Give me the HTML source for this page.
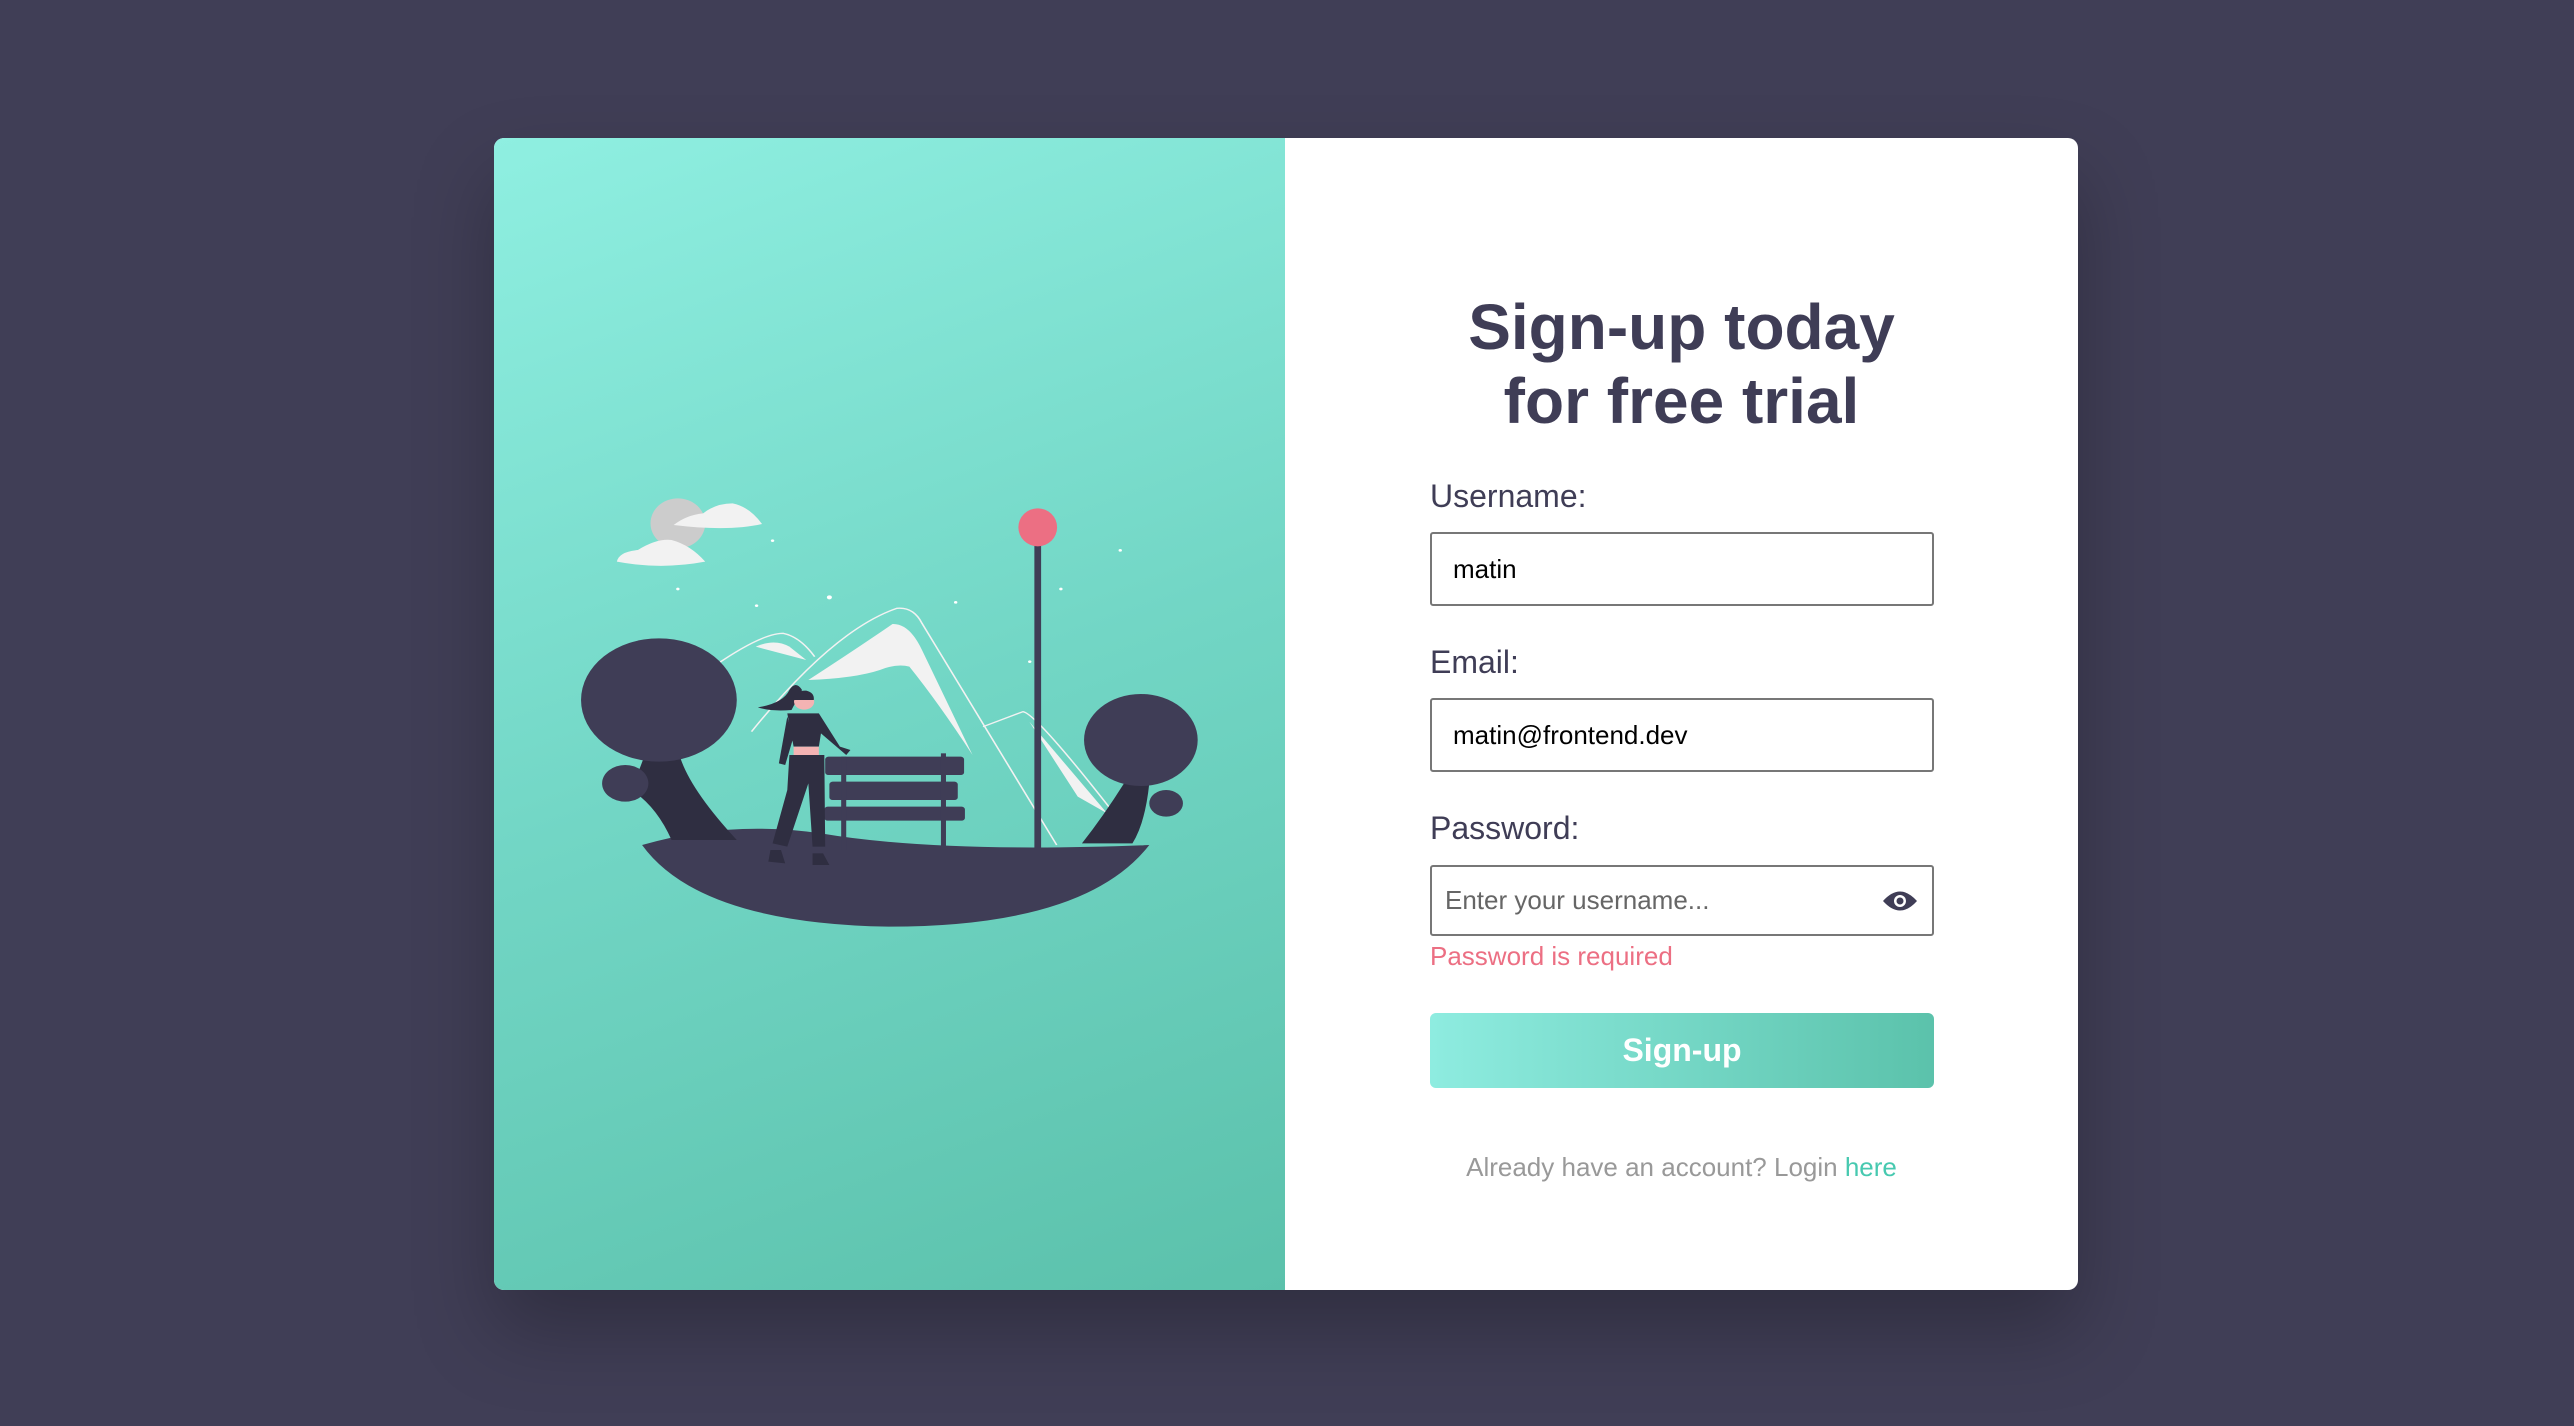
<!DOCTYPE html>
<html><head><meta charset="utf-8"><style>
*{box-sizing:border-box;margin:0;padding:0}
body{width:2574px;height:1426px;background:#403e56;font-family:"Liberation Sans",Arial,sans-serif;position:relative;overflow:hidden}
.card{position:absolute;left:494px;top:138px;width:1584px;height:1152px;border-radius:10px;overflow:hidden;background:#fff;box-shadow:0 40px 80px rgba(0,0,0,.25)}
.left{position:absolute;left:0;top:0;width:791px;height:1152px;background:linear-gradient(160deg,#8fefe1 0%,#72d6c5 50%,#5bc1ab 100%)}
.ill{position:absolute;left:66px;top:332px;width:660px;height:480px}
h1{position:absolute;left:791px;width:793px;top:152px;text-align:center;color:#3f3d56;font-size:64px;line-height:74px;font-weight:700}
.lbl{position:absolute;left:936px;color:#3f3d56;font-size:32px}
.inp{position:absolute;left:936px;width:504px;height:74px;border:2px solid #777;border-radius:3px;font-size:26px;color:#000;padding-left:21px;line-height:70px}
.err{position:absolute;left:936px;top:803px;color:#ec6f83;font-size:26px}
.btn{position:absolute;left:936px;top:875px;width:504px;height:75px;border-radius:6px;background:linear-gradient(90deg,#8eece0,#5bc2ab);color:#fff;font-weight:700;font-size:32px;text-align:center;line-height:75px}
.foot{position:absolute;left:791px;width:793px;top:1014px;text-align:center;color:#999;font-size:26px}
.foot span{color:#47c9b0}
</style></head><body>
<div class="card">
<div class="left">
<svg class="ill" viewBox="0 0 1568 1440" preserveAspectRatio="none">
<ellipse cx="280" cy="160" rx="65" ry="75" fill="#cccccc"/>
<path d="M270 165Q300 135 340 130Q370 100 410 100Q450 110 480 162Q400 185 270 165Z" fill="#f2f2f2"/>
<path d="M135 275Q140 245 185 240Q230 205 265 210Q310 225 345 275Q240 300 135 275Z" fill="#f2f2f2"/>
<g fill="#fff"><circle cx="505" cy="212" r="4"/><circle cx="280" cy="357" r="4"/><circle cx="467" cy="407" r="4"/><circle cx="640" cy="382" r="6"/><circle cx="940" cy="397" r="4"/><circle cx="1190" cy="357" r="4"/><circle cx="1331" cy="241" r="4"/><circle cx="1116" cy="575" r="4"/></g>
<path d="M370 585Q480 490 530 490Q570 500 605 560" fill="none" stroke="#f2f2f2" stroke-width="4"/>
<path d="M465 530Q510 505 545 530L585 570Z" fill="#f2f2f2"/>
<path d="M455 785Q650 480 800 415Q840 410 860 460L1180 1125" fill="none" stroke="#f2f2f2" stroke-width="4"/>
<path d="M590 630Q700 540 790 462Q830 460 860 540L980 855Q900 700 830 590Q800 580 760 600Q700 625 590 630Z" fill="#f2f2f2"/>
<path d="M1005 770L1100 725Q1130 730 1310 1020" fill="none" stroke="#f2f2f2" stroke-width="4"/>
<path d="M1115 755L1300 1030L1230 980Z" fill="#f2f2f2"/>
<rect x="1127" y="225" width="16" height="910" fill="#3f3d56"/>
<ellipse cx="1135" cy="172" rx="46" ry="57" fill="#ec6f83"/>
<path d="M195 1125Q400 1050 620 1090Q900 1150 1400 1125Q1250 1370 780 1370Q330 1360 195 1125Z" fill="#3f3d56"/>
<path d="M200 860L285 860Q310 960 420 1110L265 1110Q230 1010 170 960Z" fill="#2f2e41"/>
<ellipse cx="235" cy="690" rx="185" ry="185" fill="#3f3d56"/>
<circle cx="155" cy="940" r="55" fill="#3f3d56"/>
<path d="M1340 940L1400 940Q1390 1060 1360 1120L1240 1120Q1290 1040 1340 940Z" fill="#2f2e41"/>
<ellipse cx="1380" cy="810" rx="135" ry="138" fill="#3f3d56"/>
<circle cx="1440" cy="1000" r="40" fill="#3f3d56"/>
<g fill="#3f3d56"><rect x="630" y="860" width="330" height="55" rx="8"/><rect x="640" y="935" width="305" height="55" rx="8"/><rect x="628" y="1010" width="334" height="42" rx="8"/><rect x="668" y="860" width="12" height="280"/><rect x="905" y="850" width="12" height="290"/></g>
<path d="M470 712Q530 700 545 660Q560 630 575 660L550 720Q500 725 470 712Z" fill="#2f2e41"/>
<circle cx="580" cy="695" r="24" fill="#f4b3b3"/>
<path d="M555 690Q560 660 585 662Q605 668 603 690L570 690Z" fill="#2f2e41"/>
<path d="M540 730L615 730L665 830L690 840L680 855L620 790L615 830L555 830L540 730Z" fill="#2f2e41"/>
<path d="M540 740L520 880L535 885L555 800Z" fill="#2f2e41"/>
<rect x="555" y="830" width="60" height="25" fill="#f4b3b3"/>
<path d="M545 855L628 855L630 1130L600 1130L590 940L540 1130L505 1120L540 960Z" fill="#2f2e41"/>
<path d="M500 1140L525 1140L535 1180L495 1175Z M600 1150L625 1150L640 1185L600 1185Z" fill="#2f2e41"/>
</svg>
</div>
<h1>Sign-up today<br>for free trial</h1>
<div class="lbl" style="top:340px">Username:</div>
<div class="inp" style="top:394px">matin</div>
<div class="lbl" style="top:506px">Email:</div>
<div class="inp" style="top:560px">matin@frontend.dev</div>
<div class="lbl" style="top:672px">Password:</div>
<div class="inp" style="top:727px;height:71px;line-height:67px;color:#666;padding-left:13px">Enter your username...
<svg style="position:absolute;right:14px;top:21px" width="36" height="26" viewBox="0 0 36 26"><path d="M1 13Q18 -6 35 13Q18 32 1 13Z" fill="#3f3d56"/><circle cx="18" cy="13" r="6" fill="#fff"/><circle cx="18" cy="13" r="3.5" fill="#3f3d56"/></svg>
</div>
<div class="err">Password is required</div>
<div class="btn">Sign-up</div>
<div class="foot">Already have an account? Login <span>here</span></div>
</div>
</body></html>
